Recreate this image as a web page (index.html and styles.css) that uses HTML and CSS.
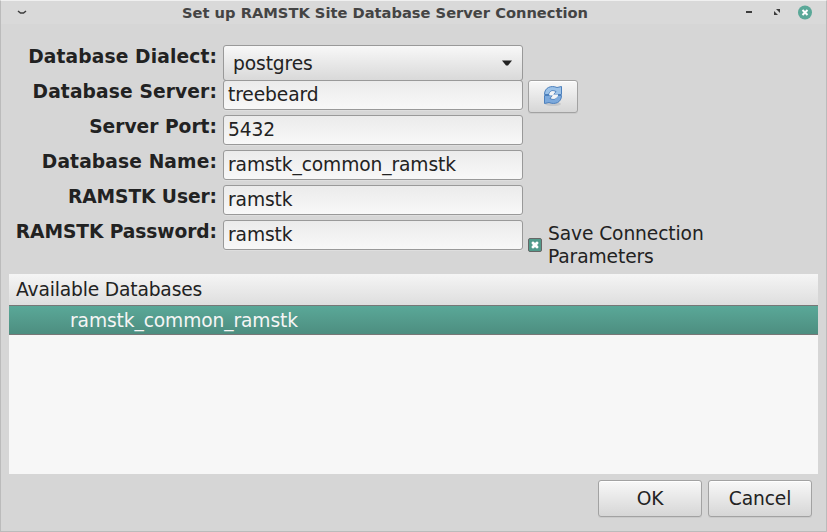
FILE: index.html
```html
<!DOCTYPE html>
<html lang="en">
<head>
<meta charset="utf-8">
<title>Set up RAMSTK Site Database Server Connection</title>
<link rel="stylesheet" href="styles.css">
</head>
<body>
<main class="window">
  <header class="titlebar">
    <svg class="menu-icon" width="10" height="6" viewBox="0 0 10 6"><path d="M1 1L3.500 3H6.500L9 1" fill="none" stroke="#3c3c3c" stroke-width="1.500"/></svg>
    <h1 class="title">Set up RAMSTK Site Database Server Connection</h1>
    <div class="controls">
      <svg width="67" height="14" viewBox="0 0 67 14">
        <path d="M1 5h6v2H1z" fill="#3c3c3c"/>
        <path d="M31 3h4v4zM29 5v4h4z" fill="#3c3c3c"/>
        <circle cx="60" cy="6.500" r="7" fill="#5aa898"/>
        <path d="M57.500 4l5 5M62.500 4l-5 5" stroke="#fff" stroke-width="2"/>
      </svg>
    </div>
  </header>
  <section class="form">
    <div class="row"><label class="label wide">Database Dialect:</label><div class="combo"><span>postgres</span><svg width="10" height="6" viewBox="0 0 10 6"><path d="M0 .5h10L6 5.500H4z" fill="#222"/></svg></div></div>
    <div class="row"><label class="label wide">Database Server:</label><div class="entry"><span>treebeard</span></div>
      <button class="button refresh"><svg width="20" height="22" viewBox="0 0 20 22">
        <ellipse cx="10" cy="19" rx="8" ry="2" fill="#c6c8cb"/>
        <path d="M1.500 9.500C1.500 2.500 8 0 14 2.500L18.500 1.500V9.500H10.500L13 6.500C9 4.500 6 6.500 6 9.500Z" fill="#9cc2e8" stroke="#4c80bd"/>
        <path d="M18.500 10.500C18.500 17.500 12 20 6 17.500L1.500 18.500V10.500H9.500L7 13.500C11 15.500 14 13.500 14 10.500Z" fill="#7ca9dc" stroke="#4c80bd"/>
        <path d="M6.500 9.500C6.500 6.500 9 5.500 12 7L10 9.500H15V11C13 14 10 14.500 8 13L10 10.500H6.500Z" fill="#f2f4f7"/>
      </svg></button></div>
    <div class="row"><label class="label">Server Port:</label><div class="entry"><span>5432</span></div></div>
    <div class="row"><label class="label wide">Database Name:</label><div class="entry"><span>ramstk_common_ramstk</span></div></div>
    <div class="row"><label class="label narrow">RAMSTK User:</label><div class="entry"><span>ramstk</span></div></div>
    <div class="row"><label class="label narrow">RAMSTK Password:</label><div class="entry"><span>ramstk</span></div>
      <div class="save"><svg class="check" width="14" height="14" viewBox="0 0 14 14"><rect x=".5" y=".5" width="13" height="13" rx="1.500" fill="#529a8b" stroke="#666"/><path d="M4 4h2v1h2V4h2v2H9v2h1v2H8V9H6v1H4V8h1V6H4z" fill="#fff" stroke="#fff" stroke-width=".6"/></svg><span>Save Connection<br>Parameters</span></div></div>
  </section>
  <section class="list">
    <div class="list-head">Available Databases</div>
    <div class="list-item">ramstk_common_ramstk</div>
  </section>
  <footer class="actions">
    <button class="button">OK</button>
    <button class="button">Cancel</button>
  </footer>
</main>
</body>
</html>
```
FILE: styles.css
```css
* { box-sizing: border-box; }
body {
  margin: 0;
  font: 18.67px/23px "DejaVu Sans", sans-serif;
  letter-spacing: -.11px;
  color: #222;
}
.window {
  width: 827px;
  height: 532px;
  background: #d6d6d6;
  border: 1px solid #bbb;
  border-top-color: #f0f0f0;
  display: flex;
  flex-direction: column;
  overflow: hidden;
}
.titlebar {
  height: 23px;
  flex: none;
  display: flex;
  align-items: center;
  background: #d9d9d9;
  padding: 0 14px 0 16px;
}
.menu-icon { flex: none; }
.title {
  margin: 0 0 0 155px;
  font-size: 14.67px;
  font-weight: bold;
  line-height: 22px;
  letter-spacing: 0;
  color: #444;
  white-space: nowrap;
}
.controls { margin-left: auto; height: 14px; }
svg { display: block; overflow: visible; }
.form { height: 250px; flex: none; padding: 21px 0 0 8px; }
.row { display: flex; height: 35px; align-items: flex-start; }
.label {
  width: 208px;
  text-align: right;
  font-weight: bold;
  letter-spacing: 0;
  white-space: nowrap;
}
.wide { letter-spacing: .12px; }
.narrow { letter-spacing: -.08px; }
.entry, .combo {
  width: 300px;
  margin-left: 6px;
  border: 1px solid #999;
  border-radius: 3px;
  white-space: nowrap;
}
.entry {
  height: 30px;
  padding: 2px 4px;
  background: linear-gradient(#ebebeb, #f8f8f8);
  box-shadow: 0 1px #dedede;
}
.combo {
  height: 36px;
  padding: 0 10px 0 9px;
  display: flex;
  align-items: center;
  justify-content: space-between;
  background: linear-gradient(#f8f8f8, #d9d9d9);
}
.button {
  font: inherit;
  color: inherit;
  letter-spacing: inherit;
  width: 104px;
  height: 37px;
  padding: 0;
  border: 1px solid #a2a2a2;
  border-radius: 3px;
  background: linear-gradient(#f8f8f8, #d6d6d6);
  box-shadow: inset 0 1px #fff, 0 1px #cacaca;
}
.refresh {
  width: 50px;
  height: 33px;
  margin: 0 0 0 5px;
  padding-bottom: 2px;
  display: flex;
  align-items: center;
  justify-content: center;
}
.save { display: flex; margin: 2px 0 0 5px; white-space: nowrap; }
.check { margin: 16px 6px 0 0; }
.list {
  width: 809px;
  height: 200px;
  flex: none;
  margin-left: 8px;
  background: #f7f7f7;
}
.list-head {
  height: 31px;
  padding: 4px 7px;
  letter-spacing: -.16px;
  background: linear-gradient(#f5f5f5, #dedede);
}
.list-item {
  height: 30px;
  padding: 3px 61px;
  color: #f5f5f5;
  border-top: 1px solid #777;
  border-bottom: 1px solid #777;
  background: linear-gradient(#5aa898, #4d8e80);
}
.actions {
  display: flex;
  justify-content: flex-end;
  gap: 6px;
  padding: 6px 14px 0 0;
}
```
